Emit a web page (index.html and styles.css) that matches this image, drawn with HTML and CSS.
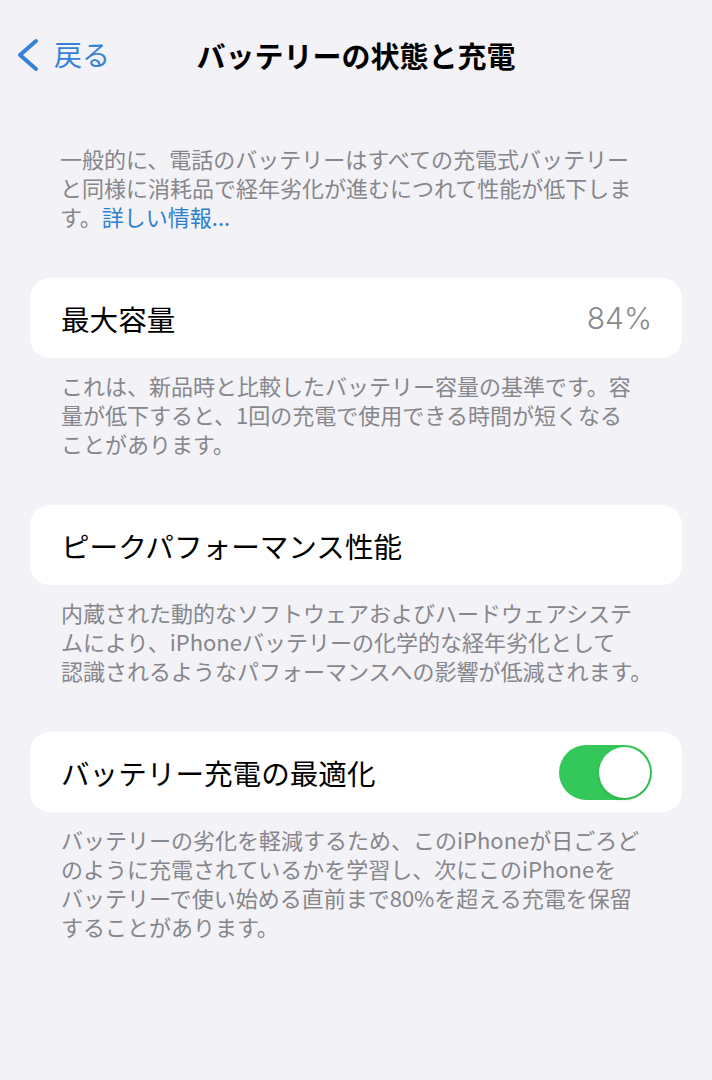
FILE: index.html
```html
<!DOCTYPE html>
<html lang="ja">
<head>
  <meta charset="UTF-8" />
  <meta name="viewport" content="width=device-width, initial-scale=1" />
  <title>バッテリーの状態と充電</title>
  <link rel="stylesheet" href="styles.css">
</head>
<body>
  <header class="navbar">
    <a class="back" href="#">
      <svg class="chevron" width="24" height="34" viewBox="0 0 24 34">
        <path d="M20 3 L4 17 L20 31" fill="none" stroke="currentColor" stroke-width="4" stroke-linecap="round" stroke-linejoin="round"/>
      </svg>
      <span>戻る</span>
    </a>
    <h1 class="title">バッテリーの状態と充電</h1>
    <div></div>
  </header>

  <main>
    <p class="intro">
      一般的に、電話のバッテリーはすべての充電式バッテリー<br>
      と同様に消耗品で経年劣化が進むにつれて性能が低下しま<br>
      す。<a class="link" href="#">詳しい情報...</a>
    </p>

    <section class="group">
      <div class="card">
        <span class="label">最大容量</span>
        <span class="value">84%</span>
      </div>
      <p class="note">
        これは、新品時と比較したバッテリー容量の基準です。容<br>
        量が低下すると、1回の充電で使用できる時間が短くなる<br>
        ことがあります。
      </p>
    </section>

    <section class="group">
      <div class="card">
        <span class="label">ピークパフォーマンス性能</span>
      </div>
      <p class="note">
        内蔵された動的なソフトウェアおよびハードウェアシステ<br>
        ムにより、iPhoneバッテリーの化学的な経年劣化として<br>
        認識されるようなパフォーマンスへの影響が低減されます。
      </p>
    </section>

    <section class="group">
      <div class="card">
        <span class="label">バッテリー充電の最適化</span>
        <span class="switch on"><span class="knob"></span></span>
      </div>
      <p class="note">
        バッテリーの劣化を軽減するため、このiPhoneが日ごろど<br>
        のように充電されているかを学習し、次にこのiPhoneを<br>
        バッテリーで使い始める直前まで80%を超える充電を保留<br>
        することがあります。
      </p>
    </section>
  </main>
</body>
</html>
```

FILE: styles.css
```css
body {
  margin: 0;
  background: #f2f2f7;
  font-family: 'Noto Sans CJK JP', 'Noto Sans', sans-serif;
  color: #000;
  min-height: 100vh;
}
.navbar {
  height: 110px;
  display: grid;
  grid-template-columns: 1fr auto 1fr;
  align-items: center;
}
.back {
  display: flex;
  align-items: center;
  gap: 14px;
  padding-left: 16px;
  color: #3582d8;
  text-decoration: none;
  font-size: 28px;
}
.back span {
  position: relative;
  top: -1px;
}
.title {
  margin: 0;
  font-size: 29px;
  font-weight: 700;
}
main {
  padding: 0 30px 40px 30px;
}
.intro {
  margin: 34px 0 0 0;
  padding: 0 0 0 30px;
  font-size: 22px;
  line-height: 29px;
  color: #86868b;
}
.link {
  color: #2f7fd0;
  text-decoration: none;
}
.group {
  margin-top: 47px;
}
.card {
  height: 80px;
  background: #fff;
  border-radius: 20px;
  display: flex;
  align-items: center;
  justify-content: space-between;
  padding: 0 30px 0 31px;
}
.label {
  font-size: 28.6px;
}
.value {
  font-family: Inter, 'Noto Sans', sans-serif;
  font-size: 30px;
  font-weight: 300;
  color: #8a8a8e;
}
.note {
  margin: 13px 0 0 0;
  padding-left: 31px;
  font-size: 22px;
  line-height: 29px;
  color: #86868b;
}
.switch {
  width: 93px;
  height: 55px;
  border-radius: 28px;
  background: #e5e5ea;
  display: flex;
  align-items: center;
  padding: 2px;
  box-sizing: border-box;
}
.switch.on {
  background: #34c759;
  justify-content: flex-end;
}
.knob {
  width: 51px;
  height: 51px;
  border-radius: 50%;
  background: #fff;
  box-shadow: 0 2px 4px rgba(0,0,0,0.12);
}
```
